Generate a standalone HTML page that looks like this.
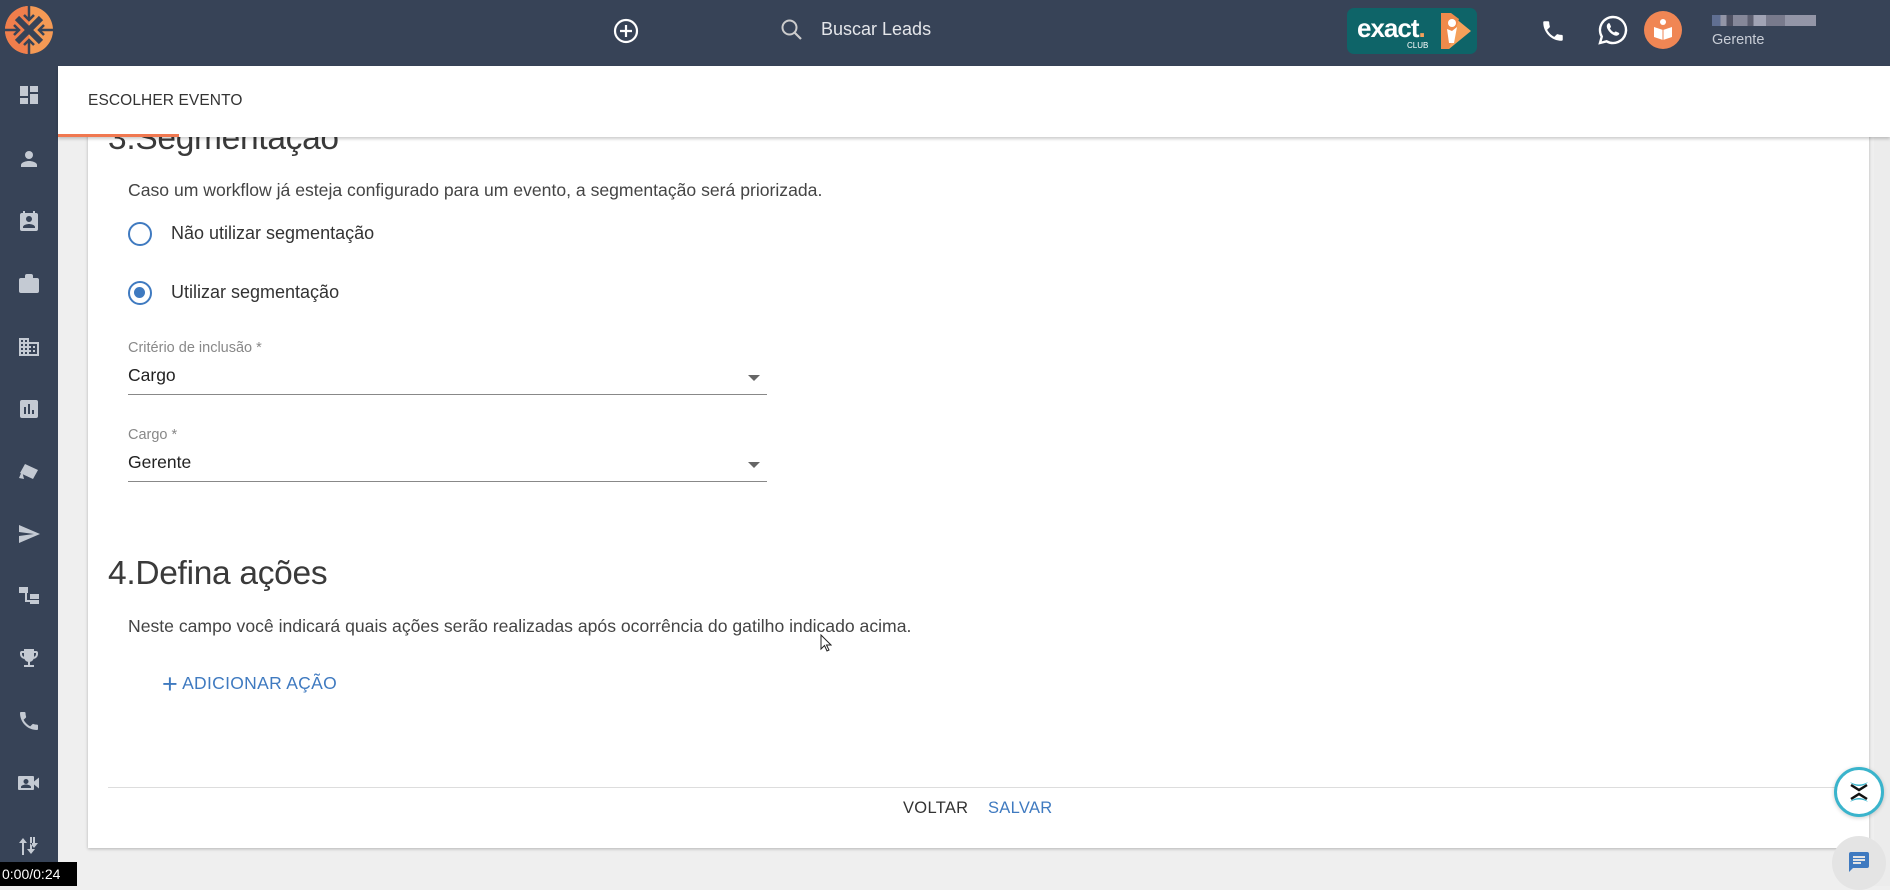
<!DOCTYPE html>
<html><head><meta charset="utf-8"><style>
*{box-sizing:border-box;margin:0;padding:0}
body{width:1890px;height:886px;overflow:hidden;background:#efefef;font-family:"Liberation Sans",sans-serif;position:relative;color:#333}
.top{position:absolute;left:0;top:0;width:1890px;height:66px;background:#374357}
.side{position:absolute;left:0;top:66px;width:58px;height:820px;background:#374357}
.side svg{position:absolute;left:17px;width:24px;height:24px;fill:#c4cad3}
.tabbar{position:absolute;left:58px;top:66px;width:1832px;height:71px;background:#fff;box-shadow:0 2px 3px rgba(0,0,0,.2);z-index:3}
.tab{position:absolute;left:30px;top:26px;font-size:15.5px;color:#333;letter-spacing:.1px}
.tabline{position:absolute;left:0;bottom:0;width:121px;height:3px;background:#f07850}
.card{position:absolute;left:88px;top:100px;width:1781px;height:748px;background:#fff;box-shadow:0 1px 3px rgba(0,0,0,.25)}
.scroll{position:absolute;left:1874px;top:137px;width:16px;height:749px;background:#ececec}
.h{position:absolute;font-size:33.5px;font-weight:300;color:#3a3a3a;letter-spacing:-.3px}
.t{position:absolute;font-size:17.6px;color:#444}
.lbl{position:absolute;font-size:14.5px;color:#888}
.val{position:absolute;font-size:17.5px;color:#222}
.line{position:absolute;height:1px;background:#888}
.arrow{position:absolute;width:0;height:0;border-left:6px solid transparent;border-right:6px solid transparent;border-top:6px solid #666}
.radio{position:absolute;width:24px;height:24px;border:2.5px solid #3f7ac0;border-radius:50%}
</style></head><body>
<div class="top">
  <svg style="position:absolute;left:4px;top:5px" width="50" height="50" viewBox="0 0 50 50"><circle cx="25" cy="25" r="24" fill="#f59a55"/><path d="M25 1a24 24 0 0 0 0 48z" fill="#f07e4c"/><path d="M13 13L37 37M37 13L13 37" stroke="#374357" stroke-width="6"/><path d="M25 1v13M25 36v13M1 25h13M36 25h13" stroke="#374357" stroke-width="2.5"/><path d="M20 10l5 5 5-5M20 40l5-5 5 5M10 20l5 5-5 5M40 20l-5 5 5 5" fill="none" stroke="#374357" stroke-width="2.5"/></svg>
  <svg style="position:absolute;left:613px;top:18px" width="26" height="26" viewBox="0 0 26 26"><circle cx="13" cy="13" r="11" fill="none" stroke="#fff" stroke-width="2.2"/><path d="M13 7v12M7 13h12" stroke="#fff" stroke-width="2.2"/></svg>
  <svg style="position:absolute;left:780px;top:18px" width="24" height="24" viewBox="0 0 24 24"><circle cx="9.5" cy="9.5" r="7" fill="none" stroke="#ccc" stroke-width="2"/><path d="M14.5 14.5L21 21" stroke="#ccc" stroke-width="2.2"/></svg>
  <div style="position:absolute;left:821px;top:19px;font-size:18px;color:#e4e6ea">Buscar Leads</div>
  <div style="position:absolute;left:1347px;top:8px;width:130px;height:46px;background:#0e6468;border-radius:7px">
    <div style="position:absolute;left:10px;top:5px;font-size:26px;font-weight:bold;color:#fff;letter-spacing:-1px">exact<span style="color:#f5a05a">.</span></div>
    <div style="position:absolute;left:60px;top:33px;font-size:8px;color:#fff">CLUB</div>
    <svg style="position:absolute;left:90px;top:3px" width="36" height="40" viewBox="0 0 36 40"><path d="M4 2h8l22 18L12 38H4z" fill="#f5a05a"/><path d="M4 2h10L22 8 12 38H4z" fill="#f08a4b"/><circle cx="15" cy="12" r="4" fill="#fff"/><path d="M10 18l5 2 5-4-3 16h-5z" fill="#fff"/></svg>
  </div>
  <svg style="position:absolute;left:1540px;top:18px" width="26" height="26" viewBox="0 0 24 24"><path fill="#fff" d="M6.6 10.8c1.4 2.8 3.8 5.1 6.6 6.6l2.2-2.2c.3-.3.7-.4 1-.2 1.1.4 2.3.6 3.6.6.6 0 1 .4 1 1V20c0 .6-.4 1-1 1C10.6 21 3 13.4 3 4c0-.6.4-1 1-1h3.5c.6 0 1 .4 1 1 0 1.3.2 2.5.6 3.6.1.3 0 .7-.2 1z"/></svg>
  <svg style="position:absolute;left:1597px;top:14px" width="32" height="32" viewBox="0 0 32 32"><path d="M16 3a13 13 0 0 0-11.2 19.6L3 29l6.6-1.7A13 13 0 1 0 16 3z" fill="none" stroke="#fff" stroke-width="2.4"/><path d="M11 9.5c.6-.6 1.5-.5 1.8.2l1.1 2.5c.2.5 0 1-.4 1.4l-.6.6c.9 1.9 2.4 3.4 4.3 4.3l.6-.6c.4-.4.9-.5 1.4-.3l2.5 1.1c.7.3.8 1.2.2 1.8-1.3 1.4-3.2 1.6-5.5.4-2.6-1.4-4.6-3.4-5.9-6-1.1-2.2-.9-4.1.5-5.4z" fill="#fff"/></svg>
  <div style="position:absolute;left:1644px;top:11px;width:38px;height:38px;border-radius:50%;background:#f08654">
    <svg style="position:absolute;left:9px;top:7px" width="20" height="22" viewBox="0 0 20 22"><circle cx="10" cy="4" r="3" fill="#fff"/><path d="M1 9l9 3 9-3v10l-9 3-9-3z" fill="#fff"/><path d="M10 12v10" stroke="#f08654" stroke-width="1"/></svg>
  </div>
  <div style="position:absolute;left:1712px;top:15px;width:104px;height:11px;background:linear-gradient(90deg,#6a7aa0 0 8%,#aab 8% 14%,#556 14% 20%,#99a 20% 34%,#667 34% 40%,#bbc 40% 52%,#889 52% 70%,#aab 70% 100%);opacity:.8"></div>
  <div style="position:absolute;left:1712px;top:32px;font-size:14.5px;color:#c8cdd6">Gerente</div>
</div>
<div class="side">
  <svg style="top:17px" viewBox="0 0 24 24"><path d="M3 13h8V3H3zm0 8h8v-6H3zm10 0h8V11h-8zm0-18v6h8V3z"/></svg>
  <svg style="top:81px" viewBox="0 0 24 24"><circle cx="12" cy="8" r="4"/><path d="M4 20v-2c0-2.7 5.3-4 8-4s8 1.3 8 4v2z"/></svg>
  <svg style="top:144px" viewBox="0 0 24 24"><path d="M19 3h-1V1h-2v2H8V1H6v2H5a2 2 0 0 0-2 2v14a2 2 0 0 0 2 2h14a2 2 0 0 0 2-2V5a2 2 0 0 0-2-2zm-7 3a3 3 0 1 1 0 6 3 3 0 0 1 0-6zm6 12H6v-1c0-2 4-3 6-3s6 1 6 3z"/></svg>
  <svg style="top:206px" viewBox="0 0 24 24"><path d="M10 4h4v2h-4zM8 6V4a2 2 0 0 1 2-2h4a2 2 0 0 1 2 2v2h4a2 2 0 0 1 2 2v11a2 2 0 0 1-2 2H4a2 2 0 0 1-2-2V8a2 2 0 0 1 2-2z"/></svg>
  <svg style="top:269px" viewBox="0 0 24 24"><path d="M12 7V3H2v18h20V7zM6 19H4v-2h2zm0-4H4v-2h2zm0-4H4V9h2zm0-4H4V5h2zm4 12H8v-2h2zm0-4H8v-2h2zm0-4H8V9h2zm0-4H8V5h2zm10 12h-8v-2h2v-2h-2v-2h2v-2h-2V9h8zm-2-8h-2v2h2zm0 4h-2v2h2z"/></svg>
  <svg style="top:331px" viewBox="0 0 24 24"><path d="M19 3H5a2 2 0 0 0-2 2v14a2 2 0 0 0 2 2h14a2 2 0 0 0 2-2V5a2 2 0 0 0-2-2zM9 17H7v-7h2zm4 0h-2V7h2zm4 0h-2v-4h2z"/></svg>
  <svg style="top:393px" viewBox="0 0 24 24"><path d="M8 5l13 6-5 9-13-6z"/><path d="M2 19l3-7 2 8z"/></svg>
  <svg style="top:456px" viewBox="0 0 24 24"><path d="M2 21l21-9L2 3v7l15 2-15 2z"/></svg>
  <svg style="top:517px" viewBox="0 0 24 24"><path d="M2 4h9v6H2zm6 6h2v7h3v2H8zm5 1h9v5h-9zm0 6h9v4h-9z"/></svg>
  <svg style="top:580px" viewBox="0 0 24 24"><path d="M19 5h-2V3H7v2H5a2 2 0 0 0-2 2v1c0 2.5 1.9 4.6 4.4 4.9A5 5 0 0 0 11 15.9V19H7v2h10v-2h-4v-3.1a5 5 0 0 0 3.6-3C19.1 12.6 21 10.5 21 8V7a2 2 0 0 0-2-2zM5 8V7h2v3.8C5.8 10.4 5 9.3 5 8zm14 0c0 1.3-.8 2.4-2 2.8V7h2z"/></svg>
  <svg style="top:643px" viewBox="0 0 24 24"><path d="M6.6 10.8c1.4 2.8 3.8 5.1 6.6 6.6l2.2-2.2c.3-.3.7-.4 1-.2 1.1.4 2.3.6 3.6.6.6 0 1 .4 1 1V20c0 .6-.4 1-1 1C10.6 21 3 13.4 3 4c0-.6.4-1 1-1h3.5c.6 0 1 .4 1 1 0 1.3.2 2.5.6 3.6.1.3 0 .7-.2 1z"/></svg>
  <svg style="top:705px" viewBox="0 0 24 24"><path d="M17 10.5V6a1 1 0 0 0-1-1H2a1 1 0 0 0-1 1v12a1 1 0 0 0 1 1h14a1 1 0 0 0 1-1v-4.5l5 4v-11zM9 8a2.5 2.5 0 1 1 0 5 2.5 2.5 0 0 1 0-5zm5 9H4v-1c0-1.7 3.3-2.5 5-2.5s5 .8 5 2.5z"/></svg>
  <svg style="top:768px" viewBox="0 0 24 24"><path d="M5 21V9H2l4-5 4 5H7v12zm8-18v12h-3l4 5 4-5h-3V3zm3 0h2v6h3l-4 5-4-5h3z" /></svg>
</div>
<div style="position:absolute;left:0;top:862px;width:77px;height:24px;background:#000;color:#fff;font-size:14px;line-height:24px;padding-left:2px;z-index:5">0:00/0:24</div>
<div class="scroll"></div>
<div class="card">
  <div class="h" style="left:20px;top:20px">3.Segmentação</div>
  <div class="t" style="left:40px;top:80px">Caso um workflow já esteja configurado para um evento, a segmentação será priorizada.</div>
  <div class="radio" style="left:40px;top:122px"></div>
  <div class="t" style="left:83px;top:123px;color:#333;font-size:18px">Não utilizar segmentação</div>
  <div class="radio" style="left:40px;top:181px"><div style="position:absolute;left:4px;top:4px;width:11px;height:11px;border-radius:50%;background:#3f7ac0"></div></div>
  <div class="t" style="left:83px;top:182px;color:#333;font-size:18px">Utilizar segmentação</div>
  <div class="lbl" style="left:40px;top:240px">Critério de inclusão *</div>
  <div class="val" style="left:40px;top:265px">Cargo</div>
  <div class="arrow" style="left:660px;top:275px"></div>
  <div class="line" style="left:40px;top:294px;width:639px"></div>
  <div class="lbl" style="left:40px;top:327px">Cargo *</div>
  <div class="val" style="left:40px;top:352px">Gerente</div>
  <div class="arrow" style="left:660px;top:362px"></div>
  <div class="line" style="left:40px;top:381px;width:639px"></div>
  <div class="h" style="left:20px;top:455px">4.Defina ações</div>
  <div class="t" style="left:40px;top:516px">Neste campo você indicará quais ações serão realizadas após ocorrência do gatilho indicado acima.</div>
  <svg style="position:absolute;left:732px;top:534px" width="12" height="18" viewBox="0 0 12 18"><path d="M1 1v14l3.5-3.5 2.5 5.5 2-1-2.5-5H11z" fill="#fff" stroke="#222" stroke-width="1"/></svg>
  <div style="position:absolute;left:74px;top:569px;font-size:17.5px;color:#3f7ac0;letter-spacing:.3px"><span style="font-size:27px;font-weight:300;vertical-align:-4px;margin-right:4px">+</span>ADICIONAR AÇÃO</div>
  <div style="position:absolute;left:20px;top:687px;width:1745px;height:1px;background:#ddd"></div>
  <div style="position:absolute;left:815px;top:699px;font-size:16.5px;color:#333;letter-spacing:.3px">VOLTAR</div>
  <div style="position:absolute;left:900px;top:699px;font-size:16.5px;color:#3f7ac0;letter-spacing:.3px">SALVAR</div>
</div>
<div style="position:absolute;left:1834px;top:767px;width:50px;height:50px;border-radius:50%;background:#fff;border:3px solid #3ab4cc;box-shadow:0 1px 4px rgba(0,0,0,.2);z-index:4">
  <svg style="position:absolute;left:10px;top:9px" width="24" height="26" viewBox="0 0 24 26"><path d="M3 3q9 5 18 0l-2 2q-7 4-14 0z" fill="#3ab4cc"/><path d="M4 6l8 5 8-5" fill="none" stroke="#111" stroke-width="2.5"/><path d="M4 20l8-5 8 5" fill="none" stroke="#111" stroke-width="2.5"/><path d="M3 23q9-5 18 0l-2-2q-7-4-14 0z" fill="#3ab4cc"/></svg>
</div>
<div style="position:absolute;left:1832px;top:836px;width:54px;height:54px;border-radius:50%;background:#e4e4e4;z-index:4">
  <svg style="position:absolute;left:15px;top:14px" width="24" height="24" viewBox="0 0 24 24"><path d="M20 2H4a2 2 0 0 0-2 2v18l4-4h14a2 2 0 0 0 2-2V4a2 2 0 0 0-2-2zM6 9h12v2H6zm8 5H6v-2h8zm4-6H6V6h12z" fill="#3f7ac0"/></svg>
</div>
<div class="tabbar"><div class="tab">ESCOLHER EVENTO</div><div class="tabline"></div></div>
</body></html>
